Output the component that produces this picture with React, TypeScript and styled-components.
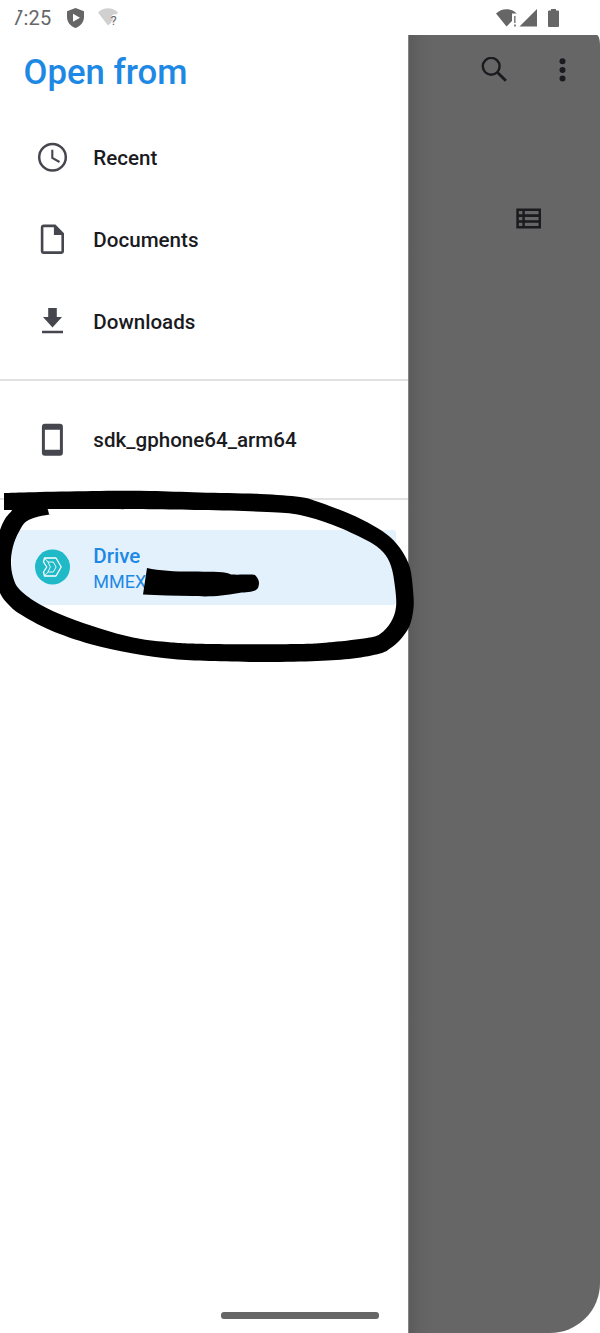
import React from 'react';
import styled, { createGlobalStyle } from 'styled-components';

const GlobalStyle = createGlobalStyle`
  * { box-sizing: border-box; }
  body { margin: 0; background: #fff; font-family: Roboto, "Liberation Sans", sans-serif; }
  svg { display: block; }
`;

const Screen = styled.div`
  position: relative;
  width: 600px;
  height: 1333px;
  overflow: hidden;
  display: flex;
  flex-direction: column;
  background: #fff;
`;

const StatusBar = styled.header`
  height: 35px;
  flex: none;
  display: flex;
  align-items: center;
  padding: 0 41px 0 12px;
  color: #666;
`;

const Clock = styled.time`
  width: 55px;
  font-size: 20px;
  line-height: 35px;
  letter-spacing: 0.2px;
  padding-top: 2px;
  clip-path: polygon(6px 0, 100% 0, 100% 100%, 0 100%, 0 24px, 6px 14px);
`;

const StatusGroup = styled.div<{ $end?: boolean }>`
  display: flex;
  align-items: center;
  gap: 14px;
  margin-left: ${(p) => (p.$end ? 'auto' : '0')};
`;

const SignalCluster = styled.div`
  display: flex;
  align-items: center;
  gap: 2px;
  margin-right: -3px;
`;

const Body = styled.div`
  flex: 1;
  display: flex;
`;

const Drawer = styled.nav`
  width: 408px;
  flex: none;
  background: #fff;
`;

const Title = styled.h1`
  margin: 0;
  height: 82px;
  padding: 16px 0 0 23.5px;
  color: #1e88e5;
  font-size: 34.7px;
  line-height: 42px;
  font-weight: 500;
`;

const Group = styled.section<{ $pad: string }>`
  padding: ${(p) => p.$pad};
`;

const Divider = styled.hr`
  margin: 0;
  border: 0;
  height: 2px;
  background: #e1e1e1;
`;

const Row = styled.div<{ $selected?: boolean }>`
  display: flex;
  align-items: center;
  height: ${(p) => (p.$selected ? 75.5 : 81.7)}px;
  margin: 0 12px;
  padding-left: 22px;
  border-radius: 3px;
  background: ${(p) => (p.$selected ? '#e3f1fd' : 'transparent')};
  color: ${(p) => (p.$selected ? '#1e88e5' : '#1b1b1f')};
`;

const IconSlot = styled.span`
  width: 36px;
  margin: 0 23.3px 1px 0;
  display: flex;
  justify-content: center;
  color: #46464f;

  svg { overflow: visible; }
`;

const Label = styled.div`
  font-size: 20.6px;
  line-height: 26px;
  font-weight: 500;
  padding-top: 1px;
`;

const Account = styled.div`
  font-size: 18px;
  line-height: 24px;
  padding-top: 1px;
`;

const Scrim = styled.main`
  flex: 1;
  background: linear-gradient(90deg, #5c5c5c 0, #636363 12px, #666 25px);
  border-left: 1px solid #858585;
  border-radius: 0 3px 50px 0 / 0 10px 50px 0;
  color: #1b1b1f;
`;

const Toolbar = styled.div`
  height: 69px;
  display: flex;
  align-items: center;
  justify-content: flex-end;
  gap: 51px;
  padding-right: 34px;
`;

const ViewOptions = styled.div`
  display: flex;
  justify-content: flex-end;
  padding: 104px 59px 0 0;
`;

const HomeHandle = styled.div`
  position: absolute;
  left: 221px;
  top: 1312px;
  width: 158px;
  height: 6.5px;
  border-radius: 3px;
  background: #666;
`;

const Marker = styled.svg`
  position: absolute;
  inset: 0;
  pointer-events: none;
`;

const ShieldIcon = () => (
  <svg width="17" height="20" viewBox="0 0 17 20">
    <path fill="currentColor" fillRule="evenodd" d="M8.5 0 17 3.2V9c0 5-3.4 9.2-8.5 11C3.4 18.2 0 14 0 9V3.2ZM6 5.8v8l7-4Z" />
  </svg>
);

const WifiUnknownIcon = () => (
  <svg width="23" height="19" viewBox="0 0 23 19">
    <path fill="#d0d0d0" d="M0 4.5C6-1.1 14-1.1 20 4.5L18.5 6.5C15 5.5 12.5 8 13 10.5H15.5C14.5 13 13 13 13 15L10 17.5Z" />
    <text x="12.6" y="16.7" fill="#666" fontSize="13">?</text>
  </svg>
);

const WifiAlertIcon = () => (
  <svg width="21" height="18" viewBox="0 0 21 18">
    <path fill="currentColor" d="M0 4.5C6-1.2 14.7-1.2 20.7 4.5H16V12L10.5 17.5ZM18.2 7h1.3v7h-1.3ZM18.2 15.5h1.6v2h-1.6Z" />
  </svg>
);

const SignalIcon = () => (
  <svg width="18" height="18" viewBox="0 0 18 18"><path fill="currentColor" d="M18 0v17.5H.5Z" /></svg>
);

const BatteryIcon = () => (
  <svg width="11" height="18" viewBox="0 0 11 18">
    <path fill="currentColor" d="M3 0h5v1.5h2q1 0 1 1V17q0 1-1 1H1q-1 0-1-1V2.5q0-1 1-1h2Z" />
  </svg>
);

const SearchIcon = () => (
  <svg width="26" height="26" viewBox="-0.5 0 26 26" fill="none" stroke="currentColor">
    <circle cx="9.7" cy="9.3" r="8.4" strokeWidth="2.4" /><path d="m16 15.5 8.4 8.3" strokeWidth="2.9" />
  </svg>
);

const MoreIcon = () => (
  <svg width="8" height="24" viewBox="-0.5 0 8 24" fill="currentColor">
    <circle cx="4" cy="3.3" r="3" /><circle cx="4" cy="12" r="3" /><circle cx="4" cy="20.6" r="3" />
  </svg>
);

const ListIcon = () => (
  <svg width="26" height="21" viewBox="0 0 26 21">
    <path transform="translate(1 0)" fill="currentColor" fillRule="evenodd" d="M.3 .5h24.7V20.5H.3ZM2.8 3v3.3h3.6V3ZM8.8 3v3.3h13.8V3ZM2.8 8.9v3.3h3.6V8.9ZM8.8 8.9v3.3h13.8V8.9ZM2.8 14.7v3.3h3.6v-3.3ZM8.8 14.7v3.3h13.8v-3.3Z" />
  </svg>
);

const ClockIcon = () => (
  <svg width="30" height="30" viewBox="-0.5 0 30 30" fill="none" stroke="currentColor">
    <circle cx="15" cy="15.3" r="13.3" strokeWidth="2.5" /><path d="M14.8 7.8v8l7.2 4.2" strokeWidth="2.1" />
  </svg>
);

const FileIcon = () => (
  <svg width="24" height="30" viewBox="-0.4 0 24 30">
    <path fill="currentColor" fillRule="evenodd" d="M3 .5h12l8.6 8.7V27q0 3-3 3H3.4q-3 0-3-3V3.5Q.4.5 3.4.5Zm0 2.8v24h18V11h-7.5V3.3Z" />
  </svg>
);

const DownloadIcon = () => (
  <svg width="22" height="26" viewBox="-0.5 0 22 26">
    <path fill="currentColor" d="M6.7 0h8.6v9h5.2L11 19.4 1.5 9h5.2ZM.5 22.7h21v2.6H.5Z" />
  </svg>
);

const PhoneIcon = () => (
  <svg width="22" height="33" viewBox="-0.4 0 22 33">
    <path fill="currentColor" fillRule="evenodd" d="M3.5.7h15q3 0 3 3v26q0 3-3 3h-15q-3 0-3-3v-26q0-3 3-3Zm0 6v20h15v-20Z" />
  </svg>
);

const DriveIcon = () => (
  <svg width="36" height="36" viewBox="0 0 36 36" fill="none" stroke="#fff">
    <circle cx="18.5" cy="18" r="17.5" fill="#1fb9c8" stroke="none" />
    <g strokeLinejoin="round">
      <path d="M10.5 9H22L27.2 18 22 27H10.5L9.5 23 12.8 18 9.5 13Z" strokeWidth="1.3" />
      <path d="M14 13h5.3l2.8 5-2.8 5H14l2.3-5ZM10.5 9 14 13M14 23l-3.5 4" strokeWidth="0.9" />
    </g>
  </svg>
);

type Point = [number, number];

// Closed curve through the points: Catmull-Rom spans written as cubic Béziers.
const smoothLoop = (points: Point[]) => {
  const n = points.length;
  const spans = points.map((b, i) => {
    const a = points[(i + n - 1) % n];
    const c = points[(i + 1) % n];
    const d = points[(i + 2) % n];
    return `C${b[0] + (c[0] - a[0]) / 6} ${b[1] + (c[1] - a[1]) / 6} ${c[0] - (d[0] - b[0]) / 6} ${c[1] - (d[1] - b[1]) / 6} ${c[0]} ${c[1]}`;
  });
  return `M${points[0][0]} ${points[0][1]}${spans.join('')}Z`;
};

const outerEdge: Point[] = [
  [4, 493], [4.5, 493], [6, 493], [40, 492], [100, 491], [150, 491], [200, 492.5], [260, 494], [300, 497], [320, 502.5],
  [350, 514], [373, 525.5], [390, 537], [402, 551], [410, 568], [413, 590], [413.5, 608], [409.5, 626],
  [400, 640], [390, 648.5], [380, 653.5], [353, 658.5], [317, 661], [267, 662], [210, 661], [173, 659],
  [133, 653.5], [90, 644], [50, 630], [20, 614], [7, 603], [0, 593], [-5, 578], [-4, 545],
  [0, 530], [5, 519], [11.5, 511], [11, 510], [4.5, 510], [4, 510], [4, 509.5], [4, 493.5],
];

const innerEdge: Point[] = [
  [48, 509.5], [49, 509], [100, 509], [200, 510], [267, 512], [300, 515], [333, 525], [367, 540.5], [383, 552],
  [391, 566], [395, 587], [396, 607], [391, 622], [380, 634], [367, 638], [333, 642], [300, 644],
  [210, 644], [167, 642], [133, 637.5], [100, 628.5], [67, 617], [40, 604.5], [20, 590], [13, 577],
  [11, 560], [14, 543], [21, 528], [27, 521], [37, 517], [49, 514.5], [49, 514],
];

const places = [
  { label: 'Recent', Icon: ClockIcon },
  { label: 'Documents', Icon: FileIcon },
  { label: 'Downloads', Icon: DownloadIcon },
];

export default function App() {
  return (
    <>
      <GlobalStyle />
      <Screen>
        <StatusBar>
          <Clock>7:25</Clock>
          <StatusGroup><ShieldIcon /><WifiUnknownIcon /></StatusGroup>
          <StatusGroup $end>
            <SignalCluster><WifiAlertIcon /><SignalIcon /></SignalCluster>
            <BatteryIcon />
          </StatusGroup>
        </StatusBar>
        <Body>
          <Drawer>
            <Title>Open from</Title>
            <Group $pad="0 0 17px">
              {places.map(({ label, Icon }) => (
                <Row key={label}><IconSlot><Icon /></IconSlot><Label>{label}</Label></Row>
              ))}
            </Group>
            <Divider />
            <Group $pad="18px 0 17px">
              <Row><IconSlot><PhoneIcon /></IconSlot><Label>sdk_gphone64_arm64</Label></Row>
            </Group>
            <Divider />
            <Group $pad="30px 0 0">
              <Row $selected>
                <IconSlot><DriveIcon /></IconSlot>
                <div><Label>Drive</Label><Account>MMEX</Account></div>
              </Row>
            </Group>
          </Drawer>
          <Scrim>
            <Toolbar><SearchIcon /><MoreIcon /></Toolbar>
            <ViewOptions><ListIcon /></ViewOptions>
          </Scrim>
        </Body>
        <HomeHandle />
        <Marker width="600" height="1333" viewBox="0 0 600 1333">
          <path fillRule="evenodd" d={smoothLoop(outerEdge) + smoothLoop(innerEdge)} />
          <path d="M147 568C161 571 183 572 198 571.5C213 572 226 571 231 574.5C240 575 251 574 255 575C259 579 260 583 258 588C254 593 247 592 239 593C221 596 211 597 192 596C175 596 158 595 143 594.5Z" />
        </Marker>
      </Screen>
    </>
  );
}
